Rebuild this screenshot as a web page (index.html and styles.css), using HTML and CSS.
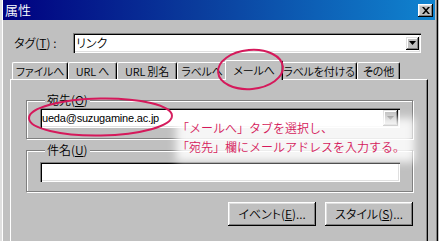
FILE: index.html
```html
<!DOCTYPE html>
<html lang="ja">
<head>
<meta charset="utf-8">
<title>属性</title>
<link rel="stylesheet" href="styles.css">
</head>
<body>
<div class="window">
  <div class="titlebar">
    <span class="title">属性</span>
    <span class="close"><svg width="8" height="7" viewBox="0 0 8 7"><path d="M0 0h2l2 2.3L6 0h2L5 3.5 8 7H6L4 4.7 2 7H0l3-3.5z" fill="#000"/></svg></span>
  </div>
  <div class="content">
    <div class="tag-row">
      <span class="field-label">タグ(<u>T</u>) :</span>
      <div class="combo combo-tag">
        <span class="combo-text">リンク</span>
        <span class="drop drop-tag"><svg width="7" height="4" viewBox="0 0 7 4"><path d="M0 0h7L3.5 4z" fill="#000"/></svg></span>
      </div>
    </div>
    <div class="tabs">
      <div class="tab t1">ファイルへ</div>
      <div class="tab t2">URL へ</div>
      <div class="tab t3">URL 別名</div>
      <div class="tab t4">ラベルへ</div>
      <div class="tab t5 selected">メールへ</div>
      <div class="tab t6">ラベルを付ける</div>
      <div class="tab t7">その他</div>
    </div>
    <div class="panel">
      <div class="group g1">
        <span class="group-label">宛先(<u>O</u>)</span>
        <div class="combo combo-mail">
          <span class="combo-text mail">ueda@suzugamine.ac.jp</span>
          <span class="drop drop-mail"><svg width="7" height="4" viewBox="0 0 7 4"><path d="M0 0h7L3.5 4z" fill="#808080"/></svg></span>
        </div>
      </div>
      <div class="group g2">
        <span class="group-label">件名(<u>U</u>)</span>
        <div class="textbox"></div>
      </div>
      <div class="buttons">
        <span class="btn">イベント(<u>E</u>)...</span>
        <span class="btn">スタイル(<u>S</u>)...</span>
      </div>
    </div>
  </div>
  <svg class="marks" width="439" height="241" viewBox="0 0 439 241">
    <ellipse cx="250.5" cy="69.5" rx="32.5" ry="19.5" transform="rotate(-5 250.5 69.5)" fill="none" stroke="#d5195b" stroke-width="2"/>
    <ellipse cx="100.5" cy="117" rx="71.5" ry="18.5" transform="rotate(-1 100.5 117)" fill="none" stroke="#d5195b" stroke-width="2"/>
  </svg>
  <div class="callout">
    <p class="callout-line">「メールへ」タブを選択し、</p>
    <p class="callout-line">「宛先」欄にメールアドレスを入力する。</p>
  </div>
</div>
</body>
</html>
```
FILE: styles.css
```css
* { box-sizing: border-box; }
html, body { margin: 0; padding: 0; }
body {
  width: 439px;
  height: 241px;
  overflow: hidden;
  background: #c0c0c0;
  font-family: "Noto Sans CJK JP", "Liberation Sans", sans-serif;
  font-size: 12px;
  font-weight: 350;
  color: #000;
}
u { text-decoration: underline; text-underline-offset: 1px; }

.window {
  position: relative;
  width: 438px;
  height: 241px;
  background: #c0c0c0;
  display: flex;
  flex-direction: column;
  padding: 0 3px;
  box-shadow: inset 2px 0 0 #dfdfdf, inset 3px 0 0 #fff, inset -1px 0 0 #000, inset -2px 0 0 #808080;
}

.titlebar {
  height: 20px;
  flex: none;
  display: flex;
  align-items: center;
  justify-content: space-between;
  padding: 0 2px 0 2px;
  background: linear-gradient(to right, #000080 0%, #0a3c9c 45%, #1084d0 100%);
}
.title {
  color: #fff;
  font-size: 13px;
  line-height: 20px;
}
.close {
  width: 15px;
  height: 13px;
  margin-top: 1px;
  background: #c0c0c0;
  display: flex;
  align-items: center;
  justify-content: center;
  box-shadow: inset -1px -1px 0 #000, inset 1px 1px 0 #fff, inset -2px -2px 0 #808080, inset 2px 2px 0 #dfdfdf;
}

.content {
  flex: 1;
  display: flex;
  flex-direction: column;
  padding: 0 7px 0 7px;
}

.tag-row {
  margin-top: 13px;
  height: 20px;
  display: flex;
  align-items: center;
  flex: none;
}
.field-label {
  width: 63px;
  padding-left: 4px;
  line-height: 20px;
  font-feature-settings: "palt";
}

.combo {
  height: 20px;
  background: #fff;
  display: flex;
  align-items: center;
  justify-content: space-between;
  box-shadow: inset 1px 1px 0 #808080, inset 2px 2px 0 #000, inset -1px -1px 0 #fff, inset -2px -2px 0 #dfdfdf;
}
.combo-tag {
  flex: 1;
  margin-right: 7px;
  padding: 0 2px 0 3px;
}
.combo-text {
  line-height: 16px;
  font-feature-settings: "palt";
}
.mail {
  font-family: "Liberation Sans", Arial, sans-serif;
  font-size: 11px;
  font-weight: 400;
  letter-spacing: -0.2px;
}
.drop {
  background: #c0c0c0;
  display: flex;
  align-items: center;
  justify-content: center;
  box-shadow: inset -1px -1px 0 #000, inset 1px 1px 0 #dfdfdf, inset -2px -2px 0 #808080, inset 2px 2px 0 #fff;
}
.drop-tag { width: 13px; height: 13px; }
.drop-mail { width: 15px; height: 16px; }

.tabs {
  flex: none;
  height: 19px;
  margin-top: 7px;
  padding-left: 2px;
  display: flex;
  align-items: flex-end;
  position: relative;
  z-index: 1;
}
.tab {
  height: 17px;
  line-height: 16px;
  text-align: center;
  white-space: nowrap;
  font-size: 11px;
  letter-spacing: -0.2px;
  background: #c0c0c0;
  border-top: 1px solid #fff;
  border-left: 1px solid #fff;
  border-right: 1px solid #000;
  border-radius: 2px 2px 0 0;
  box-shadow: inset -1px 0 0 #808080;
  font-feature-settings: "palt";
}
.t1 { width: 56px; }
.t2 { width: 49px; }
.t3 { width: 60px; }
.t4 { width: 50px; }
.t5 { width: 54px; }
.t6 { width: 76px; }
.t7 { width: 43px; }
.tab.selected {
  width: 58px;
  height: 20px;
  margin: 0 -2px -1px -2px;
  line-height: 18px;
  position: relative;
  z-index: 2;
}

.panel {
  flex: 1;
  display: flex;
  flex-direction: column;
  padding: 20px 14px 0 15px;
  border-top: 1px solid #fff;
  border-left: 1px solid #fff;
  border-right: 1px solid #000;
  box-shadow: inset -1px 0 0 #808080;
}

.group {
  display: flex;
  flex-direction: column;
  border: 1px solid #808080;
  box-shadow: 1px 1px 0 #fff, inset 1px 1px 0 #fff;
  padding: 0 12px 0 13px;
}
.g1 { padding-bottom: 10px; }
.g2 { margin-top: 11px; padding-bottom: 9px; }
.group-label {
  align-self: flex-start;
  margin: -8px 0 0 5px;
  padding: 0 2px;
  line-height: 14px;
  background: #c0c0c0;
  font-feature-settings: "palt";
}
.combo-mail {
  margin-top: 1px;
  padding: 0 2px 0 2px;
}
.textbox {
  margin-top: 5px;
  height: 20px;
  background: #fff;
  box-shadow: inset 1px 1px 0 #808080, inset 2px 2px 0 #000, inset -1px -1px 0 #fff, inset -2px -2px 0 #dfdfdf;
}

.buttons {
  margin-top: 10px;
  display: flex;
  justify-content: flex-end;
  gap: 9px;
}
.btn {
  width: 88px;
  height: 24px;
  line-height: 24px;
  text-align: center;
  background: #c0c0c0;
  font-feature-settings: "palt";
  box-shadow: inset -1px -1px 0 #000, inset 1px 1px 0 #fff, inset -2px -2px 0 #808080, inset 2px 2px 0 #dfdfdf;
}

.marks {
  position: absolute;
  left: 0;
  top: 0;
  z-index: 3;
  pointer-events: none;
}

.callout {
  position: absolute;
  left: 172px;
  top: 110px;
  width: 246px;
  height: 54px;
  padding: 8px 0 0 5px;
  z-index: 4;
}
.callout::before {
  content: "";
  position: absolute;
  inset: 8px 3px 2px 4px;
  background: rgba(255, 255, 255, 0.85);
  filter: blur(4px);
  z-index: -1;
}
.callout-line {
  margin: 0;
  line-height: 19px;
  font-size: 12px;
  color: #d5195b;
  white-space: nowrap;
}
```
